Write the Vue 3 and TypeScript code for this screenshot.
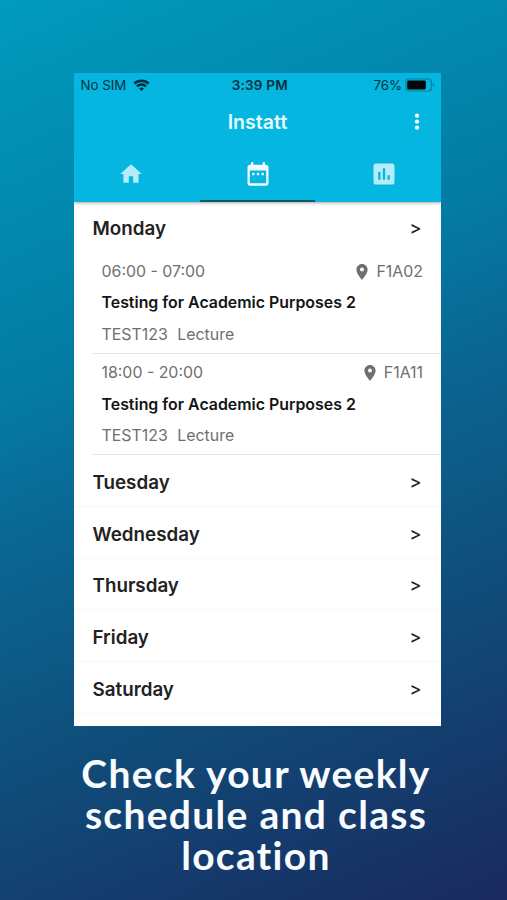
<script setup lang="ts">
interface ClassSession {
  time: string
  room: string
  title: string
  code: string
  kind: string
}
interface Day {
  name: string
  sessions: ClassSession[]
}

const days: Day[] = [
  {
    name: 'Monday',
    sessions: [
      { time: '06:00 - 07:00', room: 'F1A02', title: 'Testing for Academic Purposes 2', code: 'TEST123', kind: 'Lecture' },
      { time: '18:00 - 20:00', room: 'F1A11', title: 'Testing for Academic Purposes 2', code: 'TEST123', kind: 'Lecture' },
    ],
  },
  { name: 'Tuesday', sessions: [] },
  { name: 'Wednesday', sessions: [] },
  { name: 'Thursday', sessions: [] },
  { name: 'Friday', sessions: [] },
  { name: 'Saturday', sessions: [] },
]
</script>

<template>
  <main class="promo">
    <section class="phone">
      <header class="header">
        <div class="status">
          <div class="status-left">
            <span class="carrier">No SIM</span>
            <svg class="wifi" viewBox="0 0 16 12" width="17" height="12.5">
              <path d="M8 11.6 5.6 9.2a3.5 3.5 0 0 1 4.8 0z" fill="#06303d" />
              <path d="M3.6 7.1a6.3 6.3 0 0 1 8.8 0M1.1 4.5a9.8 9.8 0 0 1 13.8 0" fill="none" stroke="#06303d" stroke-width="2.3" />
            </svg>
          </div>
          <span class="clock">3:39 PM</span>
          <div class="status-right">
            <span class="percent">76%</span>
            <svg class="battery" viewBox="0 0 30 14" width="30" height="14">
              <rect x="0.8" y="1" width="25.6" height="12" rx="3" fill="none" stroke="#087f9c" stroke-width="1.1" />
              <rect x="2.2" y="2.5" width="18.6" height="9" rx="1.4" fill="#020608" />
              <path d="M27.8 5v4c1-.3 1.5-1 1.5-2s-.5-1.7-1.5-2z" fill="#087f9c" />
            </svg>
          </div>
        </div>
        <div class="titlebar">
          <h1 class="title">Instatt</h1>
          <svg class="more" viewBox="0 0 6 18" width="6" height="18">
            <circle cx="3" cy="2.6" r="2.2" />
            <circle cx="3" cy="8.6" r="2.2" />
            <circle cx="3" cy="14.6" r="2.2" />
          </svg>
        </div>
        <nav class="tabs">
          <div class="tab">
            <svg viewBox="0 0 24 24" width="26" height="26" fill="#b5ecfa"><path d="M10 20v-6h4v6h5v-8h3L12 3 2 12h3v8z" /></svg>
          </div>
          <div class="tab active">
            <svg viewBox="0 0 24 24" width="28" height="28" fill="#effcff"><path d="M9 11H7v2h2v-2zm4 0h-2v2h2v-2zm4 0h-2v2h2v-2zm2-7h-1V2h-2v2H8V2H6v2H5c-1.11 0-1.99.9-1.99 2L3 20c0 1.1.89 2 2 2h14c1.1 0 2-.9 2-2V6c0-1.1-.9-2-2-2zm0 16H5V9h14v11z" /></svg>
          </div>
          <div class="tab">
            <svg viewBox="0 0 24 24" width="28" height="28" fill="#b5ecfa"><path d="M19 3H5c-1.1 0-2 .9-2 2v14c0 1.1.9 2 2 2h14c1.1 0 2-.9 2-2V5c0-1.1-.9-2-2-2zM9 17H7v-7h2v7zm4 0h-2V7h2v10zm4 0h-2v-4h2v4z" /></svg>
          </div>
        </nav>
      </header>

      <div class="list">
        <section v-for="day in days" :key="day.name" class="day">
          <div class="day-row">
            <h2 class="day-name">{{ day.name }}</h2>
            <span class="arrow">&gt;</span>
          </div>
          <article v-for="s in day.sessions" :key="s.time" class="session">
            <div class="session-top">
              <span>{{ s.time }}</span>
              <span class="room">
                <svg viewBox="5 2 14 20" width="12" height="16" fill="#6f6f6f"><path d="M12 2C8.13 2 5 5.13 5 9c0 5.25 7 13 7 13s7-7.75 7-13c0-3.87-3.13-7-7-7zm0 9.5a2.500 2.500 0 0 1 0-5 2.500 2.500 0 0 1 0 5z" /></svg>
                <span>{{ s.room }}</span>
              </span>
            </div>
            <h3 class="session-title">{{ s.title }}</h3>
            <div class="session-meta"><span>{{ s.code }}</span><span>{{ s.kind }}</span></div>
          </article>
        </section>
      </div>
    </section>

    <p class="caption">Check your weekly schedule and class location</p>
  </main>
</template>

<style>
body {
  margin: 0;
}
</style>

<style scoped>
.promo {
  box-sizing: border-box;
  width: 507px;
  height: 900px;
  padding: 73px 66px 0 74px;
  overflow: hidden;
  font-family: Inter, "Liberation Sans", sans-serif;
  background: linear-gradient(157deg, #009bbd 0%, #0289af 20%, #047ba2 36%, #0a6794 49%, #0e5480 65%, #133f6f 82%, #1a295e 100%);
}
h1, h2, h3 {
  margin: 0;
}
.phone {
  display: flex;
  flex-direction: column;
  height: 652.5px;
  background: #fff;
  overflow: hidden;
}
.header {
  flex: none;
  display: flex;
  flex-direction: column;
  height: 129px;
  background: #04b6e0;
  box-shadow: 0 1px 3px rgba(0, 0, 0, 0.35);
}
.status {
  display: grid;
  grid-template-columns: 1fr auto 1fr;
  align-items: center;
  height: 24px;
  padding: 0 6px 0 6.5px;
  color: #06303d;
  font-size: 13.3px;
  line-height: 24px;
}
.status-left,
.status-right {
  display: flex;
  align-items: center;
}
.status-left {
  gap: 7px;
}
.status-right {
  justify-content: flex-end;
  gap: 3px;
}
.clock {
  padding-left: 4px;
  font-size: 13.5px;
  font-weight: 600;
  letter-spacing: 0.2px;
}
.titlebar {
  display: grid;
  grid-template-columns: 1fr auto 1fr;
  align-items: center;
  height: 49px;
  padding: 0 21px;
}
.title {
  grid-column: 2;
  color: #e6faff;
  font-size: 19.6px;
  font-weight: 600;
}
.more {
  justify-self: end;
  fill: #e6faff;
}
.tabs {
  flex: 1;
  display: flex;
  justify-content: center;
  gap: 11.5px;
}
.tab {
  flex: none;
  display: flex;
  align-items: center;
  justify-content: center;
  width: 115px;
  padding-top: 2px;
  box-sizing: border-box;
  border-bottom: 2px solid transparent;
}
.tab.active {
  border-bottom-color: #07586a;
}
.day-row {
  display: flex;
  align-items: center;
  justify-content: space-between;
  box-sizing: border-box;
  height: 51.7px;
  padding: 4px 19.5px 0 18.5px;
  border-bottom: 1px solid #f8f8f8;
  color: #222;
}
.day:first-child .day-row {
  height: 50.6px;
  padding-top: 2.5px;
  border-bottom: 0;
}
.day-name {
  font-size: 18.8px;
  font-weight: 600;
}
.arrow {
  margin-top: -2px;
  font-size: 18px;
  font-weight: 500;
}
.session {
  box-sizing: border-box;
  height: 101.3px;
  margin-left: 18px;
  padding: 3.3px 18px 0 9.5px;
  border-bottom: 1.5px solid #e4e6e7;
  color: #6f6f6f;
  font-size: 15.9px;
  line-height: 31.6px;
}
.session-top,
.room,
.session-meta {
  display: flex;
  align-items: center;
}
.session-top {
  justify-content: space-between;
}
.room {
  gap: 8px;
}
.session-title {
  color: #141414;
  font-size: 15.9px;
  font-weight: 600;
}
.session-meta {
  gap: 9.5px;
}
.caption {
  margin: 27px 0 0 -3px;
  color: #f8fcff;
  font-family: Lato, Inter, sans-serif;
  font-size: 39px;
  font-weight: 700;
  font-variant-ligatures: none;
  letter-spacing: 1.3px;
  line-height: 41px;
  text-align: center;
}
</style>
